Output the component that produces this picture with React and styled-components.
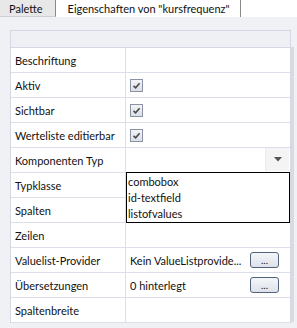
import React from "react";
import styled, { createGlobalStyle } from "styled-components";

const Global = createGlobalStyle`
  html, body { margin: 0; padding: 0; background: #ffffff; }
  body { font-family: Lato, "Open Sans", sans-serif; font-size: 11px; color: #111; }
`;

const Frame = styled.div`
  width: 297px;
  height: 328px;
  display: flex;
  flex-direction: column;
  overflow: hidden;
`;

const TabBar = styled.div`
  display: flex;
  height: 17px;
  background: #ffffff;
`;

const Tab = styled.div`
  display: flex;
  align-items: center;
  padding: ${(p) => (p.$active ? "0 10px 0 12px" : "0 12px 0 9px")};
  height: 17px;
  box-sizing: border-box;
  background: ${(p) => (p.$active ? "#ffffff" : "#e8e8e8")};
  border-right: 1px solid #8a8a8a;
  border-bottom: ${(p) => (p.$active ? "none" : "1px solid #cfcfcf")};
  color: #111;
  white-space: nowrap;
`;

const Panel = styled.div`
  flex: 1;
  background: #f0f1f5;
  padding: 13px 3px 0 10px;
  display: flex;
`;

const TableWrap = styled.div`
  display: flex;
  align-items: flex-start;
`;

const Table = styled.div`
  width: 281px;
  box-sizing: border-box;
  border: 1px solid #d5d8e2;
  border-bottom: none;
  display: grid;
  grid-template-columns: 115px 1fr;
`;

const Header = styled.div`
  grid-column: 1 / 3;
  height: 16px;
  border-bottom: 1px solid #d5d8e2;
  background: #eff0f4;
`;

const Label = styled.div`
  height: 24px;
  border-bottom: 1px solid #dcdfe8;
  border-right: 1px solid #dcdfe8;
  background: #fff;
  display: flex;
  align-items: center;
  padding-left: 4px;
  white-space: nowrap;
`;

const Value = styled.div`
  position: relative;
  height: 24px;
  border-bottom: 1px solid #dcdfe8;
  background: #fff;
  display: flex;
  align-items: center;
  padding-left: 4px;
  padding-right: 12px;
  white-space: nowrap;
  justify-content: space-between;
`;

const Scroll = styled.div`
  width: 3px;
  height: 275px;
  margin-top: 17px;
  background: #d8dae4;
`;

const CheckBox = styled.span`
  width: 11px;
  height: 11px;
  border: 1px solid #8a92a3;
  background: linear-gradient(#f3f4f7, #dcdfe6);
  display: flex;
  align-items: center;
  justify-content: center;
`;

const DropButton = styled.div`
  position: absolute;
  right: 1px;
  top: 0;
  bottom: 1px;
  width: 23px;
  background: #f4f4f5;
  border-left: 1px solid #ececee;
  display: flex;
  align-items: center;
  justify-content: center;
`;

const Popup = styled.div`
  position: absolute;
  left: 0;
  top: 24px;
  width: 164px;
  height: 51px;
  box-sizing: border-box;
  border: 1px solid #000;
  background: #fff;
  z-index: 2;
  padding: 1px 0 0 1px;
  display: flex;
  flex-direction: column;
`;

const PopupItem = styled.div`
  height: 16px;
  line-height: 16px;
  color: #111;
`;

const DotsButton = styled.button`
  width: 29px;
  height: 16px;
  padding: 0;
  border: 1px solid #52627b;
  border-radius: 3px;
  background: linear-gradient(#f4f6f9, #dde2ea);
  font-family: inherit;
  font-size: 10px;
  line-height: 10px;
  color: #111;
  display: flex;
  align-items: center;
  justify-content: center;
  margin-right: -1px;
`;

const Check = () => (
  <CheckBox>
    <svg width="9" height="9" viewBox="0 0 9 9">
      <path d="M1.5 4.8 L3.6 6.8 L7.6 2.2" fill="none" stroke="#4a4a4a" strokeWidth="1.6" />
    </svg>
  </CheckBox>
);

const rows = [
  { label: "Beschriftung" },
  { label: "Aktiv", check: true },
  { label: "Sichtbar", check: true },
  { label: "Werteliste editierbar", check: true },
  { label: "Komponenten Typ", drop: true },
  { label: "Typklasse" },
  { label: "Spalten" },
  { label: "Zeilen" },
  { label: "Valuelist-Provider", text: "Kein ValueListprovide...", button: true },
  { label: "Übersetzungen", text: "0 hinterlegt", button: true },
  { label: "Spaltenbreite" },
];

export default function App() {
  return (
    <>
      <Global />
      <Frame>
        <TabBar>
          <Tab>Palette</Tab>
          <Tab $active>Eigenschaften von "kursfrequenz"</Tab>
        </TabBar>
        <Panel>
          <TableWrap>
            <Table>
              <Header />
              {rows.map((r) => (
                <React.Fragment key={r.label}>
                  <Label>{r.label}</Label>
                  <Value>
                    {r.check && <Check />}
                    {r.text && <span>{r.text}</span>}
                    {r.button && <DotsButton>...</DotsButton>}
                    {r.drop && (
                      <>
                        <DropButton>
                          <svg width="8" height="5" viewBox="0 0 8 5">
                            <path d="M0 0 H8 L4 4.5 Z" fill="#555" />
                          </svg>
                        </DropButton>
                        <Popup>
                          <PopupItem>combobox</PopupItem>
                          <PopupItem>id-textfield</PopupItem>
                          <PopupItem>listofvalues</PopupItem>
                        </Popup>
                      </>
                    )}
                  </Value>
                </React.Fragment>
              ))}
            </Table>
            <Scroll />
          </TableWrap>
        </Panel>
      </Frame>
    </>
  );
}
